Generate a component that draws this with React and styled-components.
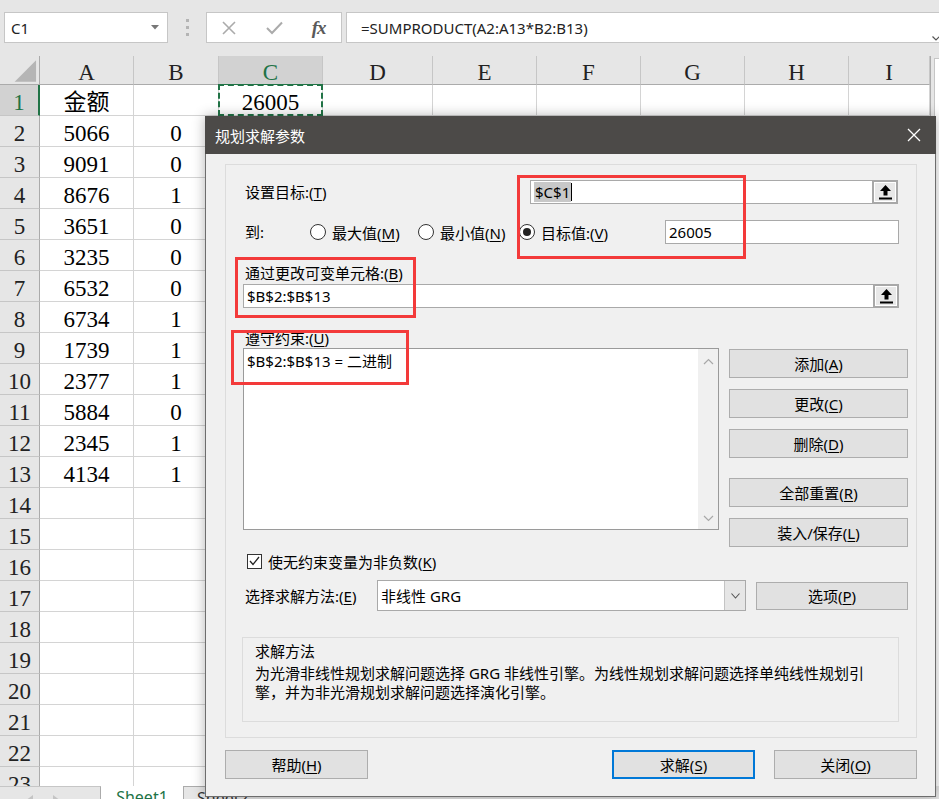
import React from 'react';
import styled, { createGlobalStyle, css } from 'styled-components';

const GlobalStyle = createGlobalStyle`
  html, body { margin: 0; padding: 0; }
  body { background: #e6e6e6; font-family: "Noto Sans", "Noto Sans CJK SC", sans-serif; }
`;

const GREEN = '#217346';

const Screen = styled.div`
  position: relative;
  width: 939px;
  height: 799px;
  overflow: hidden;
  background: #e6e6e6;
`;

/* ---------- formula bar ---------- */
const FormulaBar = styled.div`
  display: flex;
  height: 31px;
  padding: 12px 0 0 4px;
`;
const NameBox = styled.div`
  box-sizing: border-box;
  width: 164px;
  border: 1px solid #c6c6c6;
  background: #fff;
  display: flex;
  align-items: center;
  justify-content: space-between;
  padding: 0 8px 0 6px;
  font-size: 15px;
  color: #222;
`;
const Grip = styled.div`
  width: 38px;
  display: flex;
  flex-direction: column;
  align-items: center;
  justify-content: center;
  gap: 4px;
  & > i { display: block; width: 3px; height: 3px; background: #b4b4b4; }
`;
const FxBox = styled.div`
  box-sizing: border-box;
  width: 136px;
  border: 1px solid #c6c6c6;
  background: #fff;
  display: flex;
`;
const FxSlot = styled.div`
  width: 45px;
  display: flex;
  align-items: center;
  justify-content: center;
`;
const FxText = styled.span`
  font-family: "Liberation Serif", serif;
  font-style: italic;
  font-weight: bold;
  font-size: 19px;
  color: #5a5a5a;
  letter-spacing: -1px;
`;
const FormulaInput = styled.div`
  flex: 1;
  margin-left: 4px;
  margin-right: -6px;
  box-sizing: border-box;
  border: 1px solid #c6c6c6;
  background: #fff;
  display: flex;
  align-items: center;
  padding-left: 14px;
  font-size: 15px;
  color: #222;
  position: relative;
`;
const FormulaCaret = styled.span`
  position: absolute;
  right: 4px;
  top: 12px;
`;

/* ---------- sheet grid ---------- */
const Sheet = styled.div`
  margin-top: 13px;
  height: 730px;
  overflow: hidden;
  display: grid;
  grid-template-columns: 40px 94px 85px 104px 110px 104px 104px 104px 104px 81px 9px;
  grid-template-rows: 29px repeat(23, 31px);
  font-family: "Liberation Serif", "Noto Sans CJK SC", serif;
  font-size: 23px;
  color: #000;
`;
const Corner = styled.div`
  box-sizing: border-box;
  background: #e6e6e6;
  border-right: 1px solid #ababab;
  border-bottom: 1px solid #ababab;
  display: flex;
`;
const ColHead = styled.div`
  box-sizing: border-box;
  background: ${p => (p.$active ? '#d2d2d2' : '#e6e6e6')};
  color: ${p => (p.$active ? GREEN : '#222')};
  border-right: 1px solid #c6c6c6;
  border-bottom: 1px solid ${p => (p.$active ? GREEN : '#ababab')};
  text-align: center;
  padding-top: 4px;
  line-height: 26px;
`;
const RowHead = styled.div`
  box-sizing: border-box;
  background: ${p => (p.$active ? '#d2d2d2' : '#e6e6e6')};
  color: ${p => (p.$active ? GREEN : '#222')};
  border-right: ${p => (p.$active ? `2px solid ${GREEN}` : '1px solid #ababab')};
  border-bottom: 1px solid #c6c6c6;
  text-align: center;
  padding-top: 5px;
  line-height: 26px;
`;
const Cell = styled.div`
  position: relative;
  box-sizing: border-box;
  background: #fff;
  border-right: 1px solid #d4d4d4;
  border-bottom: 1px solid #d4d4d4;
  text-align: center;
  padding-top: 5px;
  line-height: 26px;
  ${p => p.$marked && css`
    &::after {
      content: '';
      position: absolute;
      left: -1px; top: -1px; right: -1px; bottom: -1px;
      border: 2px dashed ${GREEN};
    }
  `}
`;
const ScrollCol = styled.div`
  grid-column: 11;
  grid-row: 1 / span 24;
  background: #e6e6e6;
  border-left: 1px solid #ababab;
  display: flex;
`;
const ScrollThumb = styled.div`
  flex: 1;
  margin: 2px 0 0 3px;
  background: #fff;
  border-left: 1px solid #c6c6c6;
  border-top: 1px solid #c6c6c6;
`;

/* ---------- sheet tabs ---------- */
const TabBar = styled.div`
  display: flex;
  height: 20px;
  background: #e6e6e6;
`;
const TabNav = styled.div`
  box-sizing: border-box;
  width: 101px;
  border-top: 1px solid #c6c6c6;
  border-right: 1px solid #ababab;
  display: flex;
  align-items: flex-start;
  gap: 20px;
  padding: 8px 0 0 27px;
`;
const SheetTab = styled.div`
  box-sizing: border-box;
  width: ${p => (p.$active ? '82px' : '120px')};
  background: ${p => (p.$active ? '#fff' : '#e6e6e6')};
  color: ${p => (p.$active ? GREEN : '#333')};
  border-top: ${p => (p.$active ? 'none' : '1px solid #ababab')};
  border-left: ${p => (p.$active ? 'none' : '1px solid #ababab')};
  text-align: ${p => (p.$active ? 'center' : 'left')};
  padding-left: ${p => (p.$active ? '0' : '13px')};
  font-family: "Noto Sans", sans-serif;
  font-size: 16px;
  line-height: 16px;
  padding-top: 3px;
`;

/* ---------- dialog ---------- */
const Dialog = styled.section`
  position: absolute;
  left: 205px;
  top: 116px;
  width: 731px;
  height: 681px;
  box-sizing: border-box;
  background: #f0f0f0;
  border: 1px solid #6d6d6d;
  border-top: none;
  box-shadow: 0 0 12px rgba(0, 0, 0, 0.3);
  font-family: "Noto Sans", "Noto Sans CJK SC", sans-serif;
  font-size: 15px;
  color: #000;
  display: flex;
  flex-direction: column;
`;
const TitleBar = styled.div`
  height: 38px;
  margin: 0 -1px;
  background: #4c4a48;
  color: #fff;
  display: flex;
  align-items: center;
  justify-content: space-between;
  padding: 0 15px 0 10px;
  font-size: 15px;
`;
const Body = styled.div`
  padding: 10px 18px 0 19px;
`;
const Panel = styled.div`
  position: relative;
  box-sizing: border-box;
  height: 574px;
  border: 1px solid #dcdcdc;
  padding: 15px 0 0 16px;
`;
const Row = styled.div`
  display: flex;
  align-items: center;
  height: ${p => p.$h || 24}px;
  margin-top: ${p => p.$mt || 0}px;
  margin-left: ${p => p.$ml || 0}px;
`;
const Label = styled.div`
  box-sizing: border-box;
  width: ${p => (p.$w ? `${p.$w}px` : 'auto')};
  padding-left: 3px;
  line-height: 20px;
  margin-top: ${p => p.$mt || 0}px;
  white-space: nowrap;
`;
const Key = styled.span`
  text-decoration: underline;
  text-underline-offset: 2px;
`;
const TextBox = styled.div`
  box-sizing: border-box;
  width: ${p => p.$w}px;
  height: 24px;
  background: #fff;
  border: 1px solid #a9a9a9;
  display: flex;
  align-items: center;
  padding-left: 3px;
  line-height: 20px;
  margin-top: ${p => p.$mt || 0}px;
  margin-left: ${p => p.$ml || 0}px;
`;
const Selected = styled.span`
  background: #c8c8c8;
  padding: 0 1px;
`;
const Caret = styled.span`
  display: inline-block;
  width: 1px;
  height: 18px;
  background: #000;
`;
const RefButton = styled.div`
  box-sizing: border-box;
  margin: -1px -1px -1px auto;
  width: 26px;
  height: 24px;
  border: 2px solid #a8a8a8;
  box-shadow: inset 0 0 0 1px #fff;
  background: #e8e8e8;
  display: flex;
  align-items: center;
  justify-content: center;
`;
const RadioItem = styled.label`
  width: ${p => p.$w}px;
  display: flex;
  align-items: center;
  gap: 6px;
  white-space: nowrap;
`;
const RadioCircle = styled.span`
  box-sizing: border-box;
  width: 16px;
  height: 16px;
  border: 1px solid #333;
  border-radius: 50%;
  background: #fff;
  display: flex;
  align-items: center;
  justify-content: center;
  &::after {
    content: '';
    width: 8px;
    height: 8px;
    border-radius: 50%;
    background: ${p => (p.$on ? '#222' : 'transparent')};
  }
`;
const ListRow = styled.div`
  display: flex;
  margin-left: 1px;
`;
const ListBox = styled.div`
  box-sizing: border-box;
  width: 476px;
  height: 182px;
  background: #fff;
  border: 1px solid #9a9a9a;
  display: flex;
`;
const ListItems = styled.div`
  flex: 1;
  padding: 2px 0 0 3px;
  line-height: 20px;
`;
const ListScroll = styled.div`
  width: 20px;
  background: #f0f0f0;
  display: flex;
  flex-direction: column;
  justify-content: space-between;
  align-items: center;
  padding: 9px 0 7px;
`;
const SideButtons = styled.div`
  margin: 1px 0 0 10px;
  display: flex;
  flex-direction: column;
  gap: 11px;
`;
const Button = styled.button`
  box-sizing: border-box;
  width: ${p => p.$w}px;
  height: ${p => p.$h || 29}px;
  margin-top: ${p => p.$mt || 0}px;
  margin-left: ${p => p.$ml || 0}px;
  margin-right: ${p => p.$mr || 0}px;
  background: #e1e1e1;
  border: ${p => (p.$primary ? '2px solid #0078d7' : '1px solid #adadad')};
  font-family: "Noto Sans", "Noto Sans CJK SC", sans-serif;
  font-size: 15px;
  color: #000;
  padding: 0;
  line-height: 20px;
`;
const CheckBox = styled.span`
  box-sizing: border-box;
  width: 15px;
  height: 15px;
  border: 1px solid #333;
  background: #fff;
  display: flex;
  align-items: center;
  justify-content: center;
  margin: 0 6px 0 5px;
`;
const Select = styled.div`
  box-sizing: border-box;
  width: 369px;
  height: 31px;
  background: #fff;
  border: 1px solid #a9a9a9;
  display: flex;
  align-items: stretch;
`;
const SelectText = styled.div`
  flex: 1;
  display: flex;
  align-items: center;
  padding-left: 3px;
`;
const SelectArrow = styled.div`
  width: 20px;
  background: #e6e6e6;
  border-left: 1px solid #c4c4c4;
  display: flex;
  align-items: center;
  justify-content: center;
`;
const GroupBox = styled.div`
  box-sizing: border-box;
  width: 657px;
  height: 85px;
  margin-top: 26px;
  border: 1px solid #dcdcdc;
  padding: 3px 0 0 12px;
`;
const GroupTitle = styled.div`
  line-height: 20px;
`;
const GroupText = styled.div`
  margin-top: 3px;
  line-height: 19px;
`;
const RedBox = styled.div`
  position: absolute;
  box-sizing: border-box;
  left: ${p => p.$x}px;
  top: ${p => p.$y}px;
  width: ${p => p.$w}px;
  height: ${p => p.$h}px;
  border: 3px solid #f33a3a;
  pointer-events: none;
`;
const Footer = styled.div`
  display: flex;
  margin-top: 12px;
`;
const Spacer = styled.div`
  flex: 1;
`;

const UpArrowIcon = () => (
  <svg width="13" height="15" viewBox="0 0 13 15">
    <polygon points="6.5,0 12,6 8.5,6 8.5,10.5 4.5,10.5 4.5,6 1,6" fill="#000" />
    <rect x="0" y="12.5" width="13" height="2" fill="#000" />
  </svg>
);

const Chevron = ({ up }) => (
  <svg width="11" height="7" viewBox="0 0 11 7">
    <polyline
      points={up ? '1,6 5.5,1.5 10,6' : '1,1 5.5,5.5 10,1'}
      fill="none"
      stroke="#a8a8a8"
      strokeWidth="1.2"
    />
  </svg>
);

const NavTriangle = ({ left }) => (
  <svg width="6" height="9" viewBox="0 0 6 9">
    <polygon points={left ? '6,0 6,9 0,4.5' : '0,0 0,9 6,4.5'} fill="#c4c4c4" />
  </svg>
);

const colsHead = ['A', 'B', 'C', 'D', 'E', 'F', 'G', 'H', 'I'];
const colA = ['金额', '5066', '9091', '8676', '3651', '3235', '6532', '6734', '1739', '2377', '5884', '2345', '4134'];
const colB = ['', '0', '0', '1', '0', '0', '0', '1', '1', '1', '0', '1', '1'];

function SheetGrid() {
  const cells = [];
  cells.push(
    <Corner key="corner">
      <svg width="40" height="28" viewBox="0 0 40 28">
        <polygon points="37,4 37,26 15,26" fill="#b5b5b5" />
      </svg>
    </Corner>
  );
  colsHead.forEach(c => cells.push(<ColHead key={`h${c}`} $active={c === 'C'}>{c}</ColHead>));
  cells.push(
    <ScrollCol key="scroll">
      <ScrollThumb />
    </ScrollCol>
  );
  for (let r = 1; r <= 23; r++) {
    cells.push(<RowHead key={`r${r}`} $active={r === 1}>{r}</RowHead>);
    colsHead.forEach((c, ci) => {
      let v = '';
      if (ci === 0) v = colA[r - 1] || '';
      if (ci === 1) v = colB[r - 1] || '';
      if (ci === 2 && r === 1) v = '26005';
      cells.push(
        <Cell key={`c${r}${c}`} $marked={ci === 2 && r === 1}>
          {v}
        </Cell>
      );
    });
  }
  return <Sheet>{cells}</Sheet>;
}

export default function App() {
  return (
    <Screen>
      <GlobalStyle />
      <FormulaBar>
        <NameBox>
          <span>C1</span>
          <svg width="8" height="5" viewBox="0 0 8 5">
            <polygon points="0,0 8,0 4,4.5" fill="#777" />
          </svg>
        </NameBox>
        <Grip>
          <i />
          <i />
          <i />
        </Grip>
        <FxBox>
          <FxSlot>
            <svg width="14" height="14" viewBox="0 0 14 14">
              <path d="M1 1 L13 13 M13 1 L1 13" stroke="#ababab" strokeWidth="1.6" fill="none" />
            </svg>
          </FxSlot>
          <FxSlot>
            <svg width="17" height="14" viewBox="0 0 17 14">
              <path d="M1 7 L6 12 L16 1.5" stroke="#ababab" strokeWidth="2" fill="none" />
            </svg>
          </FxSlot>
          <FxSlot>
            <FxText>fx</FxText>
          </FxSlot>
        </FxBox>
        <FormulaInput>
          =SUMPRODUCT(A2:A13*B2:B13)
          <FormulaCaret>
            <svg width="8" height="5" viewBox="0 0 8 5">
              <polyline points="0.5,0.5 4,4 7.5,0.5" fill="none" stroke="#555" strokeWidth="1.2" />
            </svg>
          </FormulaCaret>
        </FormulaInput>
      </FormulaBar>

      <SheetGrid />

      <TabBar>
        <TabNav>
          <NavTriangle left />
          <NavTriangle />
        </TabNav>
        <SheetTab $active>Sheet1</SheetTab>
        <SheetTab>Sheet2</SheetTab>
      </TabBar>

      <Dialog>
        <TitleBar>
          <span>规划求解参数</span>
          <svg width="14" height="14" viewBox="0 0 14 14">
            <path d="M1 1 L13 13 M13 1 L1 13" stroke="#fff" strokeWidth="1.3" fill="none" />
          </svg>
        </TitleBar>
        <Body>
          <Panel>
            <Row>
              <Label $w={288}>
                设置目标:(<Key>T</Key>)
              </Label>
              <TextBox $w={368}>
                <Selected>$C$1</Selected>
                <Caret />
                <RefButton>
                  <UpArrowIcon />
                </RefButton>
              </TextBox>
            </Row>
            <Row $mt={16}>
              <Label $w={68}>到:</Label>
              <RadioItem $w={108}>
                <RadioCircle />
                <span>
                  最大值(<Key>M</Key>)
                </span>
              </RadioItem>
              <RadioItem $w={101}>
                <RadioCircle />
                <span>
                  最小值(<Key>N</Key>)
                </span>
              </RadioItem>
              <RadioItem $w={146}>
                <RadioCircle $on />
                <span>
                  目标值:(<Key>V</Key>)
                </span>
              </RadioItem>
              <TextBox $w={234}>26005</TextBox>
            </Row>
            <Label $mt={19}>
              通过更改可变单元格:(<Key>B</Key>)
            </Label>
            <TextBox $w={656} $mt={1} $ml={1}>
              $B$2:$B$13
              <RefButton>
                <UpArrowIcon />
              </RefButton>
            </TextBox>
            <Label $mt={20}>
              遵守约束:(<Key>U</Key>)
            </Label>
            <ListRow>
              <ListBox>
                <ListItems>$B$2:$B$13 = 二进制</ListItems>
                <ListScroll>
                  <Chevron up />
                  <Chevron />
                </ListScroll>
              </ListBox>
              <SideButtons>
                <Button $w={179}>
                  添加(<Key>A</Key>)
                </Button>
                <Button $w={179}>
                  更改(<Key>C</Key>)
                </Button>
                <Button $w={179}>
                  删除(<Key>D</Key>)
                </Button>
                <Button $w={179} $mt={9}>
                  全部重置(<Key>R</Key>)
                </Button>
                <Button $w={179}>
                  装入/保存(<Key>L</Key>)
                </Button>
              </SideButtons>
            </ListRow>
            <Row $h={20} $mt={4}>
              <CheckBox>
                <svg width="11" height="10" viewBox="0 0 11 10">
                  <polyline points="1,5 4,8.5 10,1" fill="none" stroke="#222" strokeWidth="1.3" />
                </svg>
              </CheckBox>
              <span>
                使无约束变量为非负数(<Key>K</Key>)
              </span>
            </Row>
            <Row $h={31} $mt={9}>
              <Label $w={135}>
                选择求解方法:(<Key>E</Key>)
              </Label>
              <Select>
                <SelectText>非线性 GRG</SelectText>
                <SelectArrow>
                  <svg width="9" height="6" viewBox="0 0 9 6">
                    <polyline points="0.5,0.5 4.5,5 8.5,0.5" fill="none" stroke="#555" strokeWidth="1.1" />
                  </svg>
                </SelectArrow>
              </Select>
              <Button $w={152} $h={28} $ml={10}>
                选项(<Key>P</Key>)
              </Button>
            </Row>
            <GroupBox>
              <GroupTitle>求解方法</GroupTitle>
              <GroupText>
                为光滑非线性规划求解问题选择 GRG 非线性引擎。为线性规划求解问题选择单纯线性规划引
                <br />
                擎，并为非光滑规划求解问题选择演化引擎。
              </GroupText>
            </GroupBox>

            <RedBox $x={291} $y={10} $w={229} $h={84} />
            <RedBox $x={9} $y={92} $w={181} $h={61} />
            <RedBox $x={5} $y={165} $w={178} $h={55} />
          </Panel>
          <Footer>
            <Button $w={143}>
              帮助(<Key>H</Key>)
            </Button>
            <Spacer />
            <Button $w={143} $mr={19} $primary>
              求解(<Key>S</Key>)
            </Button>
            <Button $w={143}>
              关闭(<Key>O</Key>)
            </Button>
          </Footer>
        </Body>
      </Dialog>
    </Screen>
  );
}
